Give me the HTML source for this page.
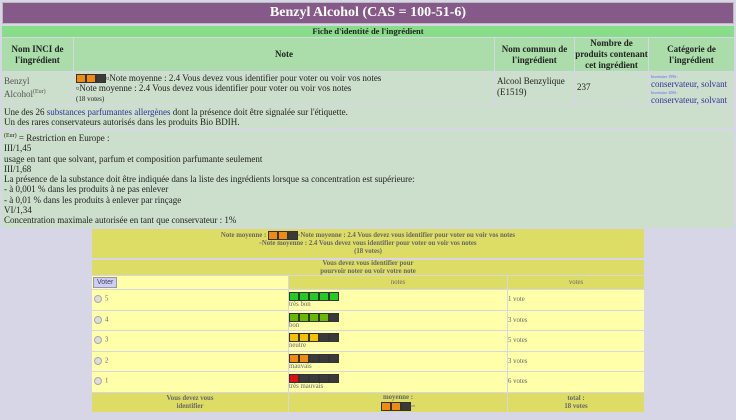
<!DOCTYPE html>
<html><head><meta charset="utf-8"><style>
body{margin:0;width:736px;height:420px;background:#d6d6e6;font-family:"Liberation Serif",serif;color:#222;overflow:hidden;position:relative}
.a{position:absolute;box-sizing:border-box;overflow:hidden}
a{color:#333399;text-decoration:none}
.bar{display:inline-block;width:10px;height:9px;border:1px solid #333;box-sizing:border-box;vertical-align:middle}
.o{background:#f08a10}.k{background:#3a3a3a}.g{background:#22cc22}.l{background:#66bb00}.y{background:#f5c000}.r{background:#e01010}
.rad{display:inline-block;width:6px;height:6px;border-radius:50%;background:#ddd;border:1px solid #aaa;margin-right:3px;vertical-align:middle}
.h{background:#aaddaa;font-weight:bold;text-align:center;font-size:9px;line-height:11px;display:flex;align-items:center;justify-content:center}
.d{background:#ccdecc;font-size:9px;line-height:11px;padding:2px}
.Y{background:#dddd66;font-size:6.8px;color:#666;font-weight:bold;text-align:center;line-height:8px}
.W{background:#ffffaa;font-size:6.8px;color:#666;padding:2px}
</style></head><body>
<div class="a" style="left:2px;top:2px;width:732px;height:22px;background:#865a88;color:#fff;font-weight:bold;font-size:14px;text-align:center;line-height:20px;border:1px solid #bbb">Benzyl Alcohol (CAS = 100-51-6)</div>
<div class="a" style="left:2px;top:26px;width:732px;height:11px;background:#88dd88;font-size:8.5px;font-weight:bold;text-align:center;line-height:11px">Fiche d'identité de l'ingrédient</div>
<div class="a h" style="left:2px;top:38px;width:71px;height:33px">Nom INCI de l'ingrédient</div>
<div class="a h" style="left:74px;top:38px;width:420px;height:33px">Note</div>
<div class="a h" style="left:495px;top:38px;width:79px;height:33px">Nom commun de l'ingrédient</div>
<div class="a h" style="left:575px;top:38px;width:73px;height:33px">Nombre de produits contenant cet ingrédient</div>
<div class="a h" style="left:649px;top:38px;width:85px;height:33px">Catégorie de l'ingrédient</div>
<div class="a d" style="left:2px;top:72px;width:71px;height:33px;color:#555;padding-top:4px">Benzyl<br>Alcohol<sup style="font-size:6px">(Eur)</sup></div>
<div class="a d" style="left:74px;top:72px;width:420px;height:33px;line-height:10px;padding-top:1px"><span class="bar o"></span><span class="bar o"></span><span class="bar k"></span>▫Note moyenne : 2.4 Vous devez vous identifier pour voter ou voir vos notes<br>▫Note moyenne : 2.4 Vous devez vous identifier pour voter ou voir vos notes<br><span style="font-size:7px">(18 votes)</span></div>
<div class="a d" style="left:495px;top:72px;width:79px;height:33px;padding-top:4px">Alcool Benzylique (E1519)</div>
<div class="a d" style="left:575px;top:72px;width:73px;height:33px;padding-top:10px">237</div>
<div class="a d" style="left:649px;top:72px;width:85px;height:33px;line-height:7.5px;padding-top:0"><span style="font-size:4px;color:#66f">Inventaire 1996 :</span><br><a>conservateur, solvant</a><br><span style="font-size:4px;color:#66f">Inventaire 2006 :</span><br><a>conservateur, solvant</a></div>
<div class="a d" style="left:2px;top:106px;width:732px;height:22px;line-height:10px;padding-top:1px">Une des 26 <a>substances parfumantes allergènes</a> dont la présence doit être signalée sur l'étiquette.<br>Un des rares conservateurs autorisés dans les produits Bio BDIH.</div>
<div class="a d" style="left:2px;top:130px;width:732px;height:98px;line-height:10.3px;padding-top:1px"><sup style="font-size:6px">(Eur)</sup> = Restriction en Europe :<br>III/1,45<br>usage en tant que solvant, parfum et composition parfumante seulement<br>III/1,68<br>La présence de la substance doit être indiquée dans la liste des ingrédients lorsque sa concentration est supérieure:<br>- à 0,001 % dans les produits à ne pas enlever<br>- à 0,01 % dans les produits à enlever par rinçage<br>VI/1,34<br>Concentration maximale autorisée en tant que conservateur : 1%</div>
<div class="a" style="left:91px;top:228px;width:554px;height:185px;background:#d6d6e6"></div>
<div class="a Y" style="left:92px;top:229px;width:552px;height:29px;padding-top:2px">Note moyenne : <span class="bar o"></span><span class="bar o"></span><span class="bar k"></span>▫Note moyenne : 2.4 Vous devez vous identifier pour voter ou voir vos notes<br>▫Note moyenne : 2.4 Vous devez vous identifier pour voter ou voir vos notes<br>(18 votes)</div>
<div class="a Y" style="left:92px;top:260px;width:552px;height:15px">Vous devez vous identifier pour<br>pourvoir noter ou voir votre note</div>
<div class="a W" style="left:92px;top:276px;width:196px;height:13px;padding:1px"><span style="display:inline-block;background:#ccccff;border:1px solid #999;font-family:'Liberation Sans';font-size:7px;padding:0 3px;color:#444;line-height:9px">Voter</span></div>
<div class="a Y" style="left:289px;top:276px;width:218px;height:13px;line-height:13px;font-weight:normal">notes</div>
<div class="a Y" style="left:508px;top:276px;width:136px;height:13px;line-height:13px;font-weight:normal">votes</div>

<div class="a W" style="left:92px;top:290px;width:196px;height:20px;padding-top:5px"><span class="rad"></span>5</div>
<div class="a W" style="left:289px;top:290px;width:218px;height:20px;line-height:7px;padding:2px 0"><span class="bar g"></span><span class="bar g"></span><span class="bar g"></span><span class="bar g"></span><span class="bar g"></span><br>très bon</div>
<div class="a W" style="left:508px;top:290px;width:136px;height:20px;padding:6px 0">1 vote</div>

<div class="a W" style="left:92px;top:311px;width:196px;height:19px;padding-top:5px"><span class="rad"></span>4</div>
<div class="a W" style="left:289px;top:311px;width:218px;height:19px;line-height:7px;padding:2px 0"><span class="bar l"></span><span class="bar l"></span><span class="bar l"></span><span class="bar l"></span><span class="bar k"></span><br>bon</div>
<div class="a W" style="left:508px;top:311px;width:136px;height:19px;padding:6px 0">3 votes</div>

<div class="a W" style="left:92px;top:331px;width:196px;height:20px;padding-top:5px"><span class="rad"></span>3</div>
<div class="a W" style="left:289px;top:331px;width:218px;height:20px;line-height:7px;padding:2px 0"><span class="bar y"></span><span class="bar y"></span><span class="bar y"></span><span class="bar k"></span><span class="bar k"></span><br>neutre</div>
<div class="a W" style="left:508px;top:331px;width:136px;height:20px;padding:6px 0">5 votes</div>

<div class="a W" style="left:92px;top:352px;width:196px;height:19px;padding-top:5px"><span class="rad"></span>2</div>
<div class="a W" style="left:289px;top:352px;width:218px;height:19px;line-height:7px;padding:2px 0"><span class="bar o"></span><span class="bar o"></span><span class="bar k"></span><span class="bar k"></span><span class="bar k"></span><br>mauvais</div>
<div class="a W" style="left:508px;top:352px;width:136px;height:19px;padding:6px 0">3 votes</div>

<div class="a W" style="left:92px;top:372px;width:196px;height:20px;padding-top:5px"><span class="rad"></span>1</div>
<div class="a W" style="left:289px;top:372px;width:218px;height:20px;line-height:7px;padding:2px 0"><span class="bar r"></span><span class="bar k"></span><span class="bar k"></span><span class="bar k"></span><span class="bar k"></span><br>très mauvais</div>
<div class="a W" style="left:508px;top:372px;width:136px;height:20px;padding:6px 0">6 votes</div>

<div class="a Y" style="left:92px;top:393px;width:196px;height:19px;padding-top:2px">Vous devez vous<br>identifier</div>
<div class="a Y" style="left:289px;top:393px;width:218px;height:19px;padding-top:1px">moyenne :<br><span class="bar o"></span><span class="bar o"></span><span class="bar k"></span>▫▫</div>
<div class="a Y" style="left:508px;top:393px;width:136px;height:19px;padding-top:2px">total :<br>18 votes</div>
</body></html>
